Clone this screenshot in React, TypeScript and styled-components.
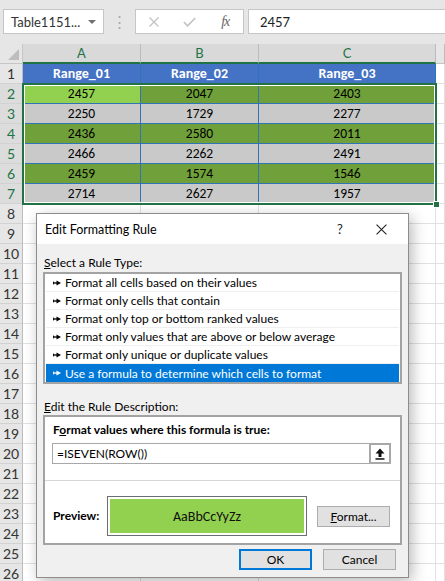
import React from "react";
import styled, { createGlobalStyle } from "styled-components";

const UI_FONT = `Lato, "Noto Sans", "Liberation Sans", sans-serif`;
const CELL_FONT = `Carlito, "Open Sans", "Liberation Sans", sans-serif`;

const GlobalStyle = createGlobalStyle`
  html, body {
    margin: 0;
    padding: 0;
    background: #ffffff;
  }
  body {
    font-family: ${UI_FONT};
    overflow: hidden;
  }
  * {
    box-sizing: border-box;
  }
`;

const Page = styled.div`
  position: relative;
  width: 445px;
  height: 581px;
  overflow: hidden;
  background: #ffffff;
`;

/* ---------- formula bar ---------- */

const FormulaBar = styled.div`
  display: flex;
  align-items: center;
  height: 44px;
  padding: 0 0 1px 3px;
  background: #e6e6e6;
`;

const NameBox = styled.div`
  display: flex;
  align-items: center;
  justify-content: space-between;
  width: 101px;
  height: 25px;
  padding: 0 7px 0 7px;
  background: #ffffff;
  border: 1px solid #c6c6c6;
  font-size: 13px;
  color: #333;
`;

const DropArrow = styled.span`
  width: 0;
  height: 0;
  border-left: 4px solid transparent;
  border-right: 4px solid transparent;
  border-top: 4px solid #707070;
`;

const Grip = styled.div`
  width: 31px;
  text-align: center;
  color: #a8a8a8;
  font-size: 15px;
  line-height: 1;
`;

const FxBox = styled.div`
  display: flex;
  width: 109px;
  height: 25px;
  background: #ffffff;
  border: 1px solid #c6c6c6;
`;

const FxSlot = styled.div`
  display: flex;
  align-items: center;
  justify-content: center;
  width: 36px;
  height: 100%;
`;

const FxText = styled.span`
  font-family: "Liberation Serif", serif;
  font-style: italic;
  font-size: 14px;
  color: #666;
  letter-spacing: -1px;
`;

const FormulaInput = styled.div`
  flex: 1;
  display: flex;
  align-items: center;
  height: 25px;
  margin-left: 4px;
  padding-left: 11px;
  background: #ffffff;
  border: 1px solid #c6c6c6;
  border-right: none;
  font-size: 13px;
  color: #222;
`;

/* ---------- sheet ---------- */

const Sheet = styled.div`
  display: grid;
  grid-template-columns: 23px 118px 118px 177px 1fr;
  grid-auto-rows: 20px;
  font-family: ${CELL_FONT};
`;

// every grid item gets an explicit slot so the selection overlay can share it
const Slot = styled.div<{ $r: number; $c: number }>`
  grid-row: ${({ $r }) => $r};
  grid-column: ${({ $c }) => $c};
`;

const Corner = styled(Slot)`
  position: relative;
  background: #e6e6e6;
  border-right: 1px solid #c6c6c6;
  border-bottom: 1px solid #c6c6c6;

  &::after {
    content: "";
    position: absolute;
    right: 3px;
    bottom: 3px;
    width: 11px;
    height: 11px;
    background: #bdbdbd;
    clip-path: polygon(100% 0, 100% 100%, 0 100%);
  }
`;

const ColHeader = styled(Slot)<{ $selected?: boolean }>`
  display: flex;
  align-items: center;
  justify-content: center;
  background: ${({ $selected }) => ($selected ? "#d9d9d9" : "#e6e6e6")};
  border-right: 1px solid #bcbcbc;
  border-bottom: ${({ $selected }) =>
    $selected ? "2px solid #217346" : "1px solid #c6c6c6"};
  color: ${({ $selected }) => ($selected ? "#217346" : "#444")};
  font-family: ${UI_FONT};
  font-size: 13px;
`;

const RowHeader = styled(Slot)<{ $selected?: boolean }>`
  display: flex;
  align-items: center;
  justify-content: center;
  background: ${({ $selected }) => ($selected ? "#dcdcdc" : "#e6e6e6")};
  border-right: 1px solid #bcbcbc;
  border-bottom: 1px solid #d2d2d2;
  color: ${({ $selected }) => ($selected ? "#217346" : "#333")};
  font-family: ${UI_FONT};
  font-size: 14px;
`;

type CellKind = "head" | "green" | "gray" | "active" | "blank";

const cellBg: Record<CellKind, string> = {
  head: "#4472c4",
  green: "#6fa03a",
  gray: "#c9c9c9",
  active: "#92d050",
  blank: "#ffffff",
};

const Cell = styled(Slot)<{ $kind: CellKind }>`
  display: flex;
  align-items: center;
  justify-content: center;
  background: ${({ $kind }) => cellBg[$kind]};
  color: ${({ $kind }) => ($kind === "head" ? "#ffffff" : "#000")};
  font-weight: ${({ $kind }) => ($kind === "head" ? 700 : 400)};
  font-size: ${({ $kind }) => ($kind === "head" ? "14px" : "13.5px")};
  border-right: 1px solid
    ${({ $kind }) => ($kind === "blank" ? "#e1e1e1" : "#2f75b5")};
  border-bottom: 1px solid
    ${({ $kind }) =>
      $kind === "blank" ? "#e1e1e1" : $kind === "head" ? "#4472c4" : "#2f75b5"};
`;

const Selection = styled.div`
  grid-row: 3 / 9;
  grid-column: 2 / 5;
  position: relative;
  margin: -1px -1px -1px -1px;
  border: 2px solid #217346;
  box-shadow: inset 0 0 0 1px #ffffff;
  pointer-events: none;
`;

const FillHandle = styled.span`
  position: absolute;
  right: -5px;
  bottom: -5px;
  width: 7px;
  height: 7px;
  background: #217346;
  border: 1px solid #ffffff;
`;

/* ---------- dialog ---------- */

const Dialog = styled.div`
  position: absolute;
  left: 36px;
  top: 213px;
  width: 373px;
  height: 365px;
  display: flex;
  flex-direction: column;
  background: #f0f0f0;
  border: 1px solid #8c8c8c;
  box-shadow: 3px 4px 14px rgba(0, 0, 0, 0.28);
  font-family: ${UI_FONT};
  font-size: 12px;
  color: #000;
`;

const TitleBar = styled.div`
  display: flex;
  align-items: center;
  height: 30px;
  padding-left: 8px;
  background: #ffffff;
`;

const Title = styled.div`
  flex: 1;
  font-size: 12.5px;
`;

const TitleButton = styled.div<{ $width: number }>`
  display: flex;
  align-items: center;
  justify-content: center;
  width: ${({ $width }) => $width}px;
  height: 30px;
  font-size: 13px;
  color: #222;
`;

const Body = styled.div`
  display: flex;
  flex-direction: column;
  padding: 0 6px;
`;

const SectionLabel = styled.div<{ $top: number }>`
  margin-top: ${({ $top }) => $top}px;
  padding-left: 1px;
  line-height: 16px;
`;

const ListBox = styled.div`
  margin-top: 1px;
  width: 359px;
  padding: 0 1px;
  background: #ffffff;
  border: 2px solid #a3a3a3;
`;

const ListItem = styled.div<{ $selected?: boolean }>`
  display: flex;
  align-items: center;
  gap: 4px;
  height: 18px;
  padding-left: 7px;
  background: ${({ $selected }) => ($selected ? "#0078d7" : "#ffffff")};
  color: ${({ $selected }) => ($selected ? "#ffffff" : "#000")};
  border-bottom: 1px solid
    ${({ $selected }) => ($selected ? "#0078d7" : "#efefef")};

  &:last-child {
    border-bottom: none;
  }
`;

const DescBox = styled.div`
  display: flex;
  flex-direction: column;
  width: 359px;
  height: 130px;
  background: #ffffff;
  border: 2px solid #a3a3a3;
`;

const BoldLabel = styled.div`
  font-weight: 700;
  line-height: 16px;
`;

const FormulaLabel = styled(BoldLabel)`
  padding: 5px 0 0 8px;
`;

const FormulaRow = styled.div`
  display: flex;
  width: 339px;
  height: 21px;
  margin: 5px 0 0 7px;
`;

const FormulaField = styled.div`
  flex: 1;
  display: flex;
  align-items: center;
  padding-left: 4px;
  border: 1px solid #a8a8a8;
  border-right: none;
  font-size: 12px;
`;

const CollapseButton = styled.div`
  display: flex;
  align-items: center;
  justify-content: center;
  width: 22px;
  background: #ffffff;
  border: 2px solid #a8a8a8;
`;

const Separator = styled.div`
  height: 1px;
  margin-top: 16px;
  background: #d6d6d6;
`;

const PreviewRow = styled.div`
  display: flex;
  align-items: center;
  margin-top: 15px;
  padding-left: 8px;
`;

const PreviewLabel = styled(BoldLabel)`
  width: 54px;
`;

const PreviewBox = styled.div`
  width: 200px;
  height: 40px;
  padding: 2px;
  background: #ffffff;
  border: 1px solid #6e6e6e;
`;

const PreviewFill = styled.div`
  display: flex;
  align-items: center;
  justify-content: center;
  height: 100%;
  background: #92d050;
  font-family: ${CELL_FONT};
  font-size: 14px;
  color: #111;
`;

const Button = styled.div<{ $primary?: boolean }>`
  display: flex;
  align-items: center;
  justify-content: center;
  width: 73px;
  height: 21px;
  background: #e1e1e1;
  border: ${({ $primary }) =>
    $primary ? "2px solid #0078d7" : "1px solid #adadad"};
  font-size: 12px;
  color: #000;
`;

const FormatButton = styled(Button)`
  margin-left: 10px;
`;

const ButtonRow = styled.div`
  display: flex;
  justify-content: flex-end;
  gap: 11px;
  margin-top: 4px;
  padding-right: 12px;
`;

/* ---------- icons ---------- */

const Bullet = ({ color }: { color: string }) => (
  <svg width="8" height="6" viewBox="0 0 8 6">
    <path d="M0.5 3H4" stroke={color} strokeWidth="1.3" />
    <path d="M3.5 0.6L8 3L3.5 5.4Z" fill={color} />
    <path d="M0.6 1.6V4.4" stroke={color} strokeWidth="1" />
  </svg>
);

const CrossIcon = ({ size, color, width }: { size: number; color: string; width: number }) => (
  <svg width={size} height={size} viewBox="0 0 10 10">
    <path d="M0.5 0.5L9.5 9.5M9.5 0.5L0.5 9.5" stroke={color} strokeWidth={width} />
  </svg>
);

const CheckIcon = () => (
  <svg width="13" height="10" viewBox="0 0 13 10">
    <path d="M0.8 5L4.6 8.8L12.2 1" stroke="#c2c2c2" strokeWidth="1.6" fill="none" />
  </svg>
);

const UpArrowIcon = () => (
  <svg width="10" height="12" viewBox="0 0 10 12">
    <path d="M5 0.5L9.5 5.5H6.5V9H3.5V5.5H0.5Z" fill="#111" />
    <rect x="0.5" y="10.2" width="9" height="1.5" fill="#111" />
  </svg>
);

/* ---------- data ---------- */

const headers = ["Range_01", "Range_02", "Range_03"];
const rows = [
  [2457, 2047, 2403],
  [2250, 1729, 2277],
  [2436, 2580, 2011],
  [2466, 2262, 2491],
  [2459, 1574, 1546],
  [2714, 2627, 1957],
];

const ruleTypes = [
  "Format all cells based on their values",
  "Format only cells that contain",
  "Format only top or bottom ranked values",
  "Format only values that are above or below average",
  "Format only unique or duplicate values",
  "Use a formula to determine which cells to format",
];

const TOTAL_ROWS = 27;

const App = () => {
  const sheetRows: React.ReactNode[] = [];

  for (let r = 1; r <= TOTAL_ROWS; r++) {
    const gridRow = r + 1;
    const selected = r >= 2 && r <= 7;
    sheetRows.push(
      <RowHeader key={`h${r}`} $r={gridRow} $c={1} $selected={selected}>
        {r}
      </RowHeader>
    );
    for (let c = 0; c < 3; c++) {
      let kind: CellKind = "blank";
      let text: React.ReactNode = null;
      if (r === 1) {
        kind = "head";
        text = headers[c];
      } else if (r <= 7) {
        const even = r % 2 === 0;
        kind = r === 2 && c === 0 ? "active" : even ? "green" : "gray";
        text = rows[r - 2][c];
      }
      sheetRows.push(
        <Cell key={`c${r}-${c}`} $r={gridRow} $c={c + 2} $kind={kind}>
          {text}
        </Cell>
      );
    }
    sheetRows.push(<Cell key={`x${r}`} $r={gridRow} $c={5} $kind="blank" />);
  }

  return (
    <Page>
      <GlobalStyle />
      <FormulaBar>
        <NameBox>
          <span>Table1151...</span>
          <DropArrow />
        </NameBox>
        <Grip>⋮</Grip>
        <FxBox>
          <FxSlot>
            <CrossIcon size={10} color="#c2c2c2" width={1.3} />
          </FxSlot>
          <FxSlot>
            <CheckIcon />
          </FxSlot>
          <FxSlot>
            <FxText>fx</FxText>
          </FxSlot>
        </FxBox>
        <FormulaInput>2457</FormulaInput>
      </FormulaBar>

      <Sheet>
        <Corner $r={1} $c={1} />
        <ColHeader $r={1} $c={2} $selected>A</ColHeader>
        <ColHeader $r={1} $c={3} $selected>B</ColHeader>
        <ColHeader $r={1} $c={4} $selected>C</ColHeader>
        <ColHeader $r={1} $c={5} />
        {sheetRows}
        <Selection>
          <FillHandle />
        </Selection>
      </Sheet>

      <Dialog>
        <TitleBar>
          <Title>Edit Formatting Rule</Title>
          <TitleButton $width={30}>?</TitleButton>
          <TitleButton $width={53}>
            <CrossIcon size={11} color="#222" width={1} />
          </TitleButton>
        </TitleBar>
        <Body>
          <SectionLabel $top={11}>
            <u>S</u>elect a Rule Type:
          </SectionLabel>
          <ListBox>
            {ruleTypes.map((t, i) => {
              const sel = i === ruleTypes.length - 1;
              return (
                <ListItem key={t} $selected={sel}>
                  <Bullet color={sel ? "#ffffff" : "#000000"} />
                  {t}
                </ListItem>
              );
            })}
          </ListBox>
          <SectionLabel $top={15}>
            <u>E</u>dit the Rule Description:
          </SectionLabel>
          <DescBox>
            <FormulaLabel>
              F<u>o</u>rmat values where this formula is true:
            </FormulaLabel>
            <FormulaRow>
              <FormulaField>=ISEVEN(ROW())</FormulaField>
              <CollapseButton>
                <UpArrowIcon />
              </CollapseButton>
            </FormulaRow>
            <Separator />
            <PreviewRow>
              <PreviewLabel>Preview:</PreviewLabel>
              <PreviewBox>
                <PreviewFill>AaBbCcYyZz</PreviewFill>
              </PreviewBox>
              <FormatButton>
                <span>
                  <u>F</u>ormat...
                </span>
              </FormatButton>
            </PreviewRow>
          </DescBox>
        </Body>
        <ButtonRow>
          <Button $primary>OK</Button>
          <Button>Cancel</Button>
        </ButtonRow>
      </Dialog>
    </Page>
  );
};

export default App;
